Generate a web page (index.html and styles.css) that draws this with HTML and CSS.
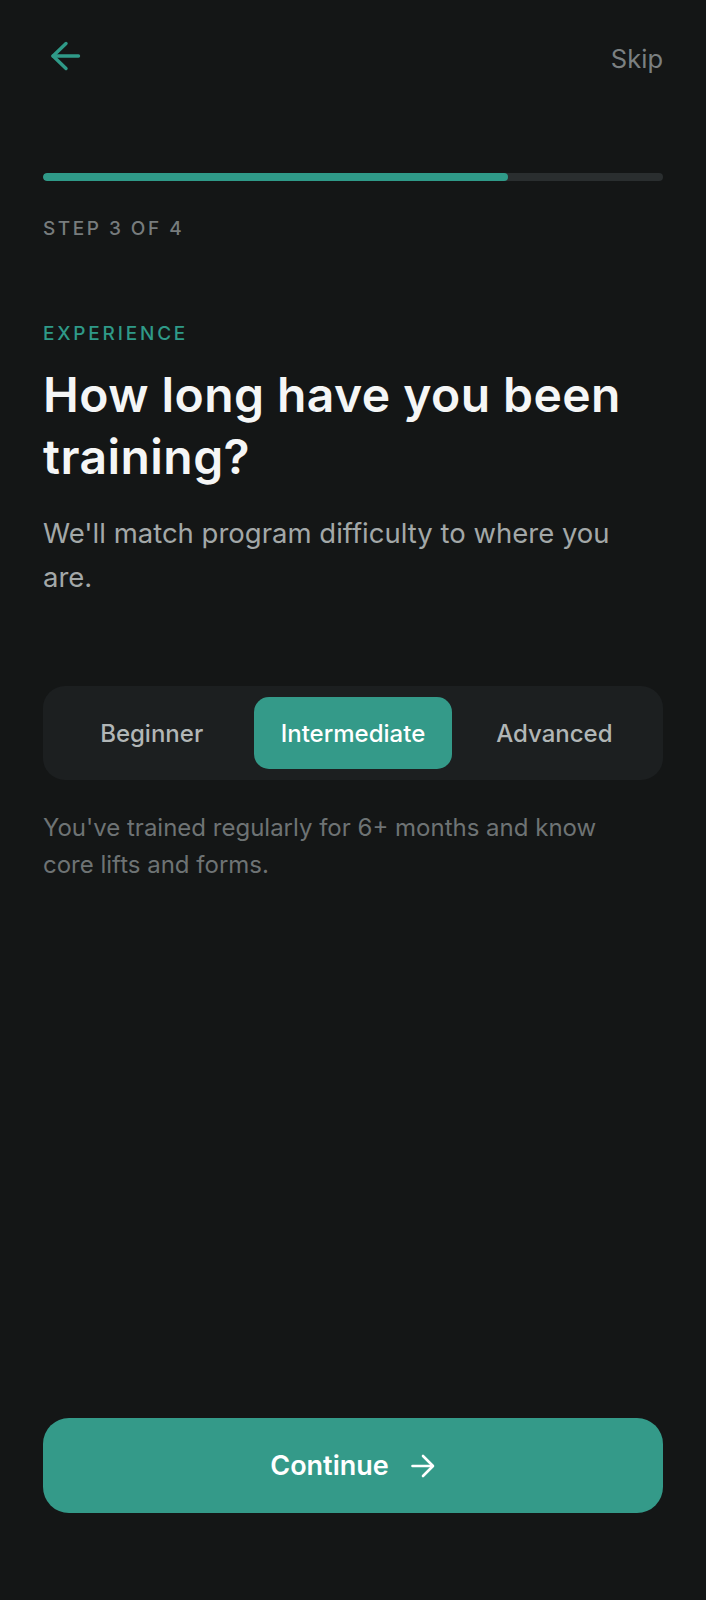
FILE: index.html
```html
<!DOCTYPE html>
<html lang="en">
<head>
<meta charset="utf-8">
<title>Experience</title>
<link rel="stylesheet" href="styles.css">
</head>
<body>
<main class="screen">
  <header class="topbar">
    <button class="back" aria-label="Back">
      <svg width="40" height="36" viewBox="0 0 40 36" fill="none" stroke="currentColor" stroke-width="3.4" stroke-linecap="round" stroke-linejoin="round">
        <path d="M35.5 18H10"/>
        <path d="M23 5.5L10 18l13 12.5"/>
      </svg>
    </button>
    <span class="skip">Skip</span>
  </header>

  <div class="progress"><div class="progress-fill" style="width:75%"></div></div>
  <p class="step">STEP 3 OF 4</p>

  <p class="eyebrow">EXPERIENCE</p>
  <h1 class="title">How long have you been training?</h1>
  <p class="subtitle">We'll match program difficulty to where you are.</p>

  <div class="segmented">
    <span class="seg">Beginner</span>
    <span class="seg active">Intermediate</span>
    <span class="seg">Advanced</span>
  </div>
  <p class="desc">You've trained regularly for 6+ months and know core lifts and forms.</p>

  <button class="cta">
    <span>Continue</span>
    <svg width="26" height="26" viewBox="0 0 26 26" fill="none" stroke="currentColor" stroke-width="2.6" stroke-linecap="round" stroke-linejoin="round">
      <path d="M2.5 13h20"/>
      <path d="M13 3l10 10-10 10"/>
    </svg>
  </button>
</main>
</body>
</html>
```

FILE: styles.css
```css
* { box-sizing: border-box; }

html, body {
  margin: 0;
  padding: 0;
  background: #141616;
}

body {
  font-family: Inter, "Noto Sans", "Liberation Sans", sans-serif;
  color: #f4f5f5;
}

.screen {
  min-height: 1600px;
  padding: 38px 43px 87px;
  display: flex;
  flex-direction: column;
}

.topbar {
  display: flex;
  justify-content: space-between;
  align-items: flex-start;
  height: 36px;
}

.back {
  background: none;
  border: 0;
  padding: 0;
  margin: 0;
  width: 40px;
  height: 36px;
  color: #2f9a88;
  display: block;
}

.back svg { display: block; }

.skip {
  margin-top: 6px;
  font-size: 25.5px;
  line-height: 30px;
  color: #7b8081;
}

.progress {
  margin-top: 99px;
  height: 8px;
  border-radius: 4px;
  background: #2a2e2f;
  overflow: hidden;
}

.progress-fill {
  height: 100%;
  border-radius: 4px;
  background: #2f9a88;
}

.step {
  margin: 35px 0 0;
  font-size: 19px;
  line-height: 26px;
  letter-spacing: 2.5px;
  color: #777c7d;
  font-weight: 500;
}

.eyebrow {
  margin: 79px 0 0;
  font-size: 19px;
  line-height: 26px;
  letter-spacing: 2.8px;
  color: #2f9a88;
  font-weight: 500;
}

.title {
  margin: 17px 0 0;
  font-size: 48px;
  line-height: 62px;
  font-weight: 600;
  letter-spacing: 0.45px;
  color: #f5f6f6;
}

.subtitle {
  margin: 23px 0 0;
  font-size: 27.5px;
  line-height: 44px;
  color: #a3a8a8;
}

.segmented {
  margin-top: 87px;
  padding: 11px 10px;
  background: #1c1f20;
  border-radius: 22px;
  display: grid;
  grid-template-columns: 1fr 1fr 1fr;
  gap: 4px;
}

.seg {
  height: 72px;
  display: flex;
  align-items: center;
  justify-content: center;
  font-size: 24px;
  font-weight: 500;
  color: #b1b6b6;
  border-radius: 15px;
}

.seg.active {
  background: #349a89;
  color: #ffffff;
}

.desc {
  margin: 29px 0 0;
  max-width: 590px;
  font-size: 24px;
  line-height: 37px;
  color: #6e7374;
}

.cta {
  margin-top: auto;
  height: 95px;
  width: 100%;
  border: 0;
  border-radius: 26px;
  background: #349a89;
  color: #ffffff;
  font-family: inherit;
  font-size: 27px;
  font-weight: 600;
  display: flex;
  align-items: center;
  justify-content: center;
  gap: 21px;
}

.cta svg { display: block; }
```
